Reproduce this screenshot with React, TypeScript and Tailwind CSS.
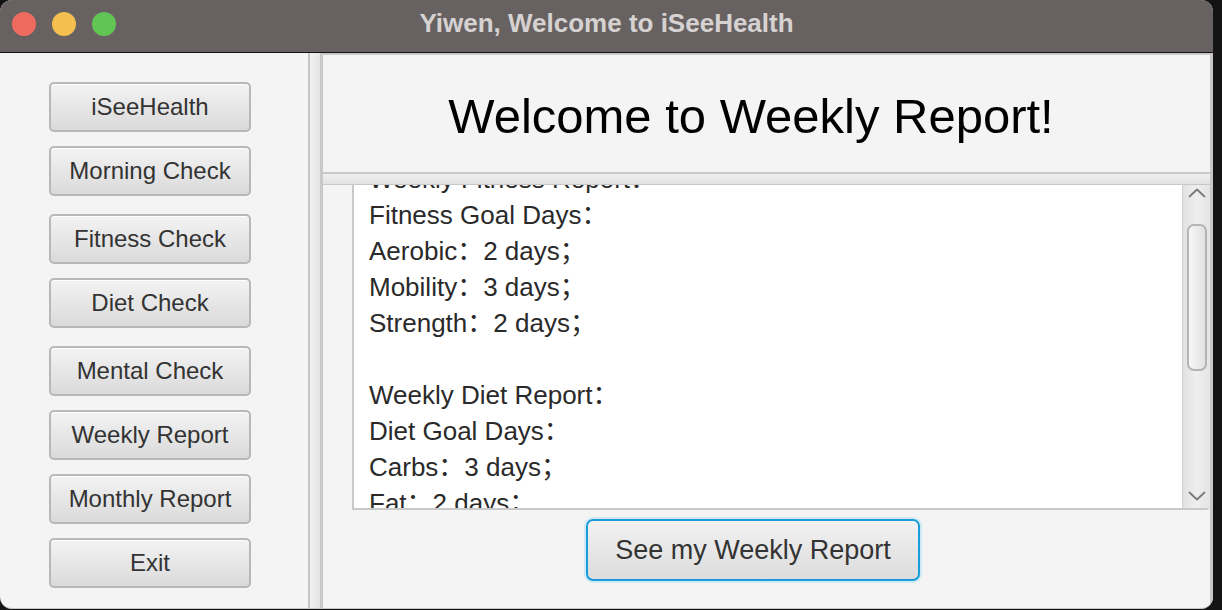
import React from 'react';

const navItems: { label: string; gap: string }[] = [
    { label: 'iSeeHealth', gap: 'mb-[14px]' },
    { label: 'Morning Check', gap: 'mb-[18px]' },
    { label: 'Fitness Check', gap: 'mb-[14px]' },
    { label: 'Diet Check', gap: 'mb-[18px]' },
    { label: 'Mental Check', gap: 'mb-[14px]' },
    { label: 'Weekly Report', gap: 'mb-[14px]' },
    { label: 'Monthly Report', gap: 'mb-[14px]' },
    { label: 'Exit', gap: 'mb-0' },
];

const reportLines = [
    'Weekly Fitness Report：',
    'Fitness Goal Days：',
    'Aerobic：2 days；',
    'Mobility：3 days；',
    'Strength：2 days；',
    '',
    'Weekly Diet Report：',
    'Diet Goal Days：',
    'Carbs：3 days；',
    'Fat：2 days；',
    'Protein：2 days；',
];

const Chevron: React.FC<{ dir: 'up' | 'down' }> = ({ dir }) => (
    <svg width="18" height="10" viewBox="0 0 18 10" fill="none" stroke="#7a7a7a" strokeWidth="1.8" strokeLinecap="round" strokeLinejoin="round">
        {dir === 'up' ? <polyline points="1.5,8.5 9,1.5 16.5,8.5" /> : <polyline points="1.5,1.5 9,8.5 16.5,1.5" />}
    </svg>
);

const App: React.FC = () => {
    return (
        <div className="w-[1222px] h-[610px] bg-[#141414] font-['Liberation_Sans','Noto_Sans_CJK_SC',sans-serif]">
            <div className="w-[1213px] h-[609px] rounded-[12px] overflow-hidden flex flex-col bg-[#f4f4f4] border-b border-[#c4c4c4]">
                {/* title bar */}
                <div className="relative h-[53px] shrink-0 bg-[#676261] border-b border-[#121212] flex items-center justify-center">
                    <div className="absolute left-[12px] top-[12px] flex gap-[16px]">
                        <span className="w-[24px] h-[24px] rounded-full bg-[#ee6a5f]" />
                        <span className="w-[24px] h-[24px] rounded-full bg-[#f5bf4f]" />
                        <span className="w-[24px] h-[24px] rounded-full bg-[#61c454]" />
                    </div>
                    <span className="text-[26px] font-bold text-[#d6d2d2] leading-none pb-[7px]">Yiwen, Welcome to iSeeHealth</span>
                </div>

                <div className="flex-1 flex min-h-0">
                    {/* sidebar */}
                    <div className="w-[310px] shrink-0 border-r-2 border-[#c4c4c4] flex flex-col items-center pt-[29px] pr-[8px]">
                        {navItems.map(item => (
                            <button
                                key={item.label}
                                className={`${item.gap} w-[202px] h-[50px] shrink-0 rounded-[5px] border-2 border-[#b8b8b8] bg-gradient-to-b from-[#f3f3f3] to-[#dadada] shadow-[inset_0_1px_0_#ffffff] text-[24px] text-[#333333] leading-none flex items-center justify-center`}
                            >
                                {item.label}
                            </button>
                        ))}
                    </div>

                    {/* split divider */}
                    <div className="w-[10px] shrink-0 bg-gradient-to-r from-[#f2f2f2] to-[#e4e4e4]" />

                    {/* main panel */}
                    <div className="flex-1 min-w-0 flex flex-col border-l-[3px] border-r-[3px] border-t-2 border-[#c8c8c8]">
                        <div className="h-[117px] shrink-0 flex items-center justify-center pr-[31px] pt-[6px]">
                            <h1 className="text-[49px] text-black leading-none">Welcome to Weekly Report!</h1>
                        </div>

                        <div className="h-[13px] shrink-0 border-t-2 border-b border-[#c8c8c8] bg-gradient-to-b from-[#f0f0f0] to-[#e2e2e2]" />

                        <div className="flex-1 flex flex-col">
                            <div className="ml-[29px] h-[325px] shrink-0 flex bg-white border-l-2 border-b-2 border-[#c9c9c9] rounded-br-[4px] overflow-hidden">
                                <div className="flex-1 min-w-0 overflow-hidden pl-[15px]">
                                    <div className="mt-[-24px] text-[26px] leading-[36px] text-[#2a2a2a]">
                                        {reportLines.map((line, i) => (
                                            <div key={i} className="h-[36px] whitespace-pre">{line}</div>
                                        ))}
                                    </div>
                                </div>
                                <div className="w-[28px] shrink-0 border-l border-[#d2d2d2] bg-gradient-to-r from-[#e2e2e2] via-[#eeeeee] to-[#e4e4e4] flex flex-col items-center">
                                    <div className="mt-[3px] h-[10px] flex items-center"><Chevron dir="up" /></div>
                                    <div className="mt-[26px] w-[20px] h-[147px] rounded-[7px] border-2 border-[#b4b4b4] bg-gradient-to-r from-[#f6f6f6] to-[#e2e2e2]" />
                                    <div className="mt-auto mb-[7px] h-[10px] flex items-center"><Chevron dir="down" /></div>
                                </div>
                            </div>

                            <div className="mt-[9px] ml-[263px]">
                                <button className="w-[334px] h-[62px] rounded-[7px] border-2 border-[#1b9bd7] shadow-[0_0_0_2px_#cfe9f5] bg-gradient-to-b from-[#f2f2f2] to-[#dcdcdc] text-[27px] text-[#333333] leading-none flex items-center justify-center">
                                    See my Weekly Report
                                </button>
                            </div>
                        </div>
                    </div>
                </div>
            </div>
        </div>
    );
};

export default App;
